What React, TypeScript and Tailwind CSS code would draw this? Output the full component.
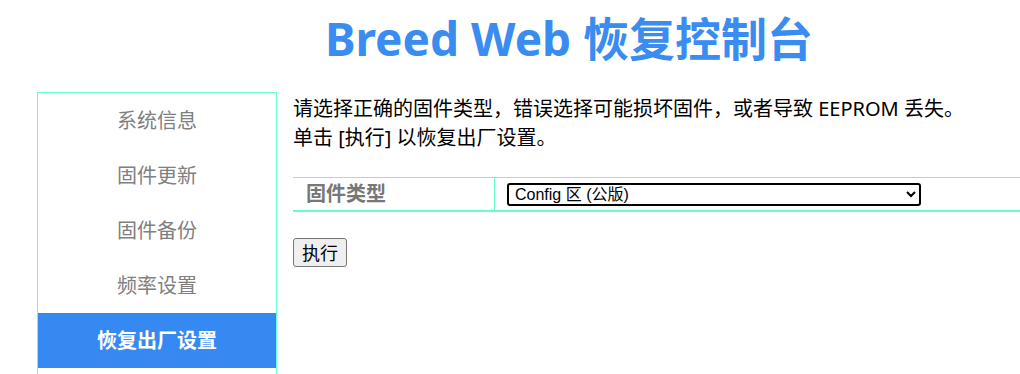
const menu = ["系统信息", "固件更新", "固件备份", "频率设置", "恢复出厂设置"];

export default function App() {
  return (
    <div
      className="h-[374px] w-full overflow-hidden bg-white text-black"
      style={{ fontFamily: '"Noto Sans", "Noto Sans CJK SC", sans-serif' }}
    >
      <h1 className="flex h-[92px] items-center justify-center pl-[118px] pb-[16px] text-[46px] font-bold leading-none text-[#3a8cf0]">
        Breed Web 恢复控制台
      </h1>
      <div className="flex pl-[37px]">
        <ul className="h-[300px] w-[240px] shrink-0 border border-[#66ffcc]">
          {menu.map((item, i) => (
            <li
              key={item}
              className={
                i === menu.length - 1
                  ? "flex h-[55px] items-center justify-center bg-[#3589f0] text-[20px] font-bold text-white"
                  : "flex h-[55px] items-center justify-center text-[20px] text-[#808080]"
              }
            >
              {item}
            </li>
          ))}
        </ul>
        <div className="ml-[16px] flex-1">
          <p className="pt-[2px] text-[20px] leading-[29px]">
            请选择正确的固件类型，错误选择可能损坏固件，或者导致 EEPROM 丢失。
            <br />
            单击 [执行] 以恢复出厂设置。
          </p>
          <div className="mt-[25px] flex w-[760px] border-t border-b-2 border-[#66ffcc]">
            <div className="flex h-[32px] w-[202px] items-center border-r border-[#66ffcc] pl-[13px] text-[20px] font-bold text-[#777777]">
              固件类型
            </div>
            <div className="flex items-center pl-[12px]">
              <select
                className="h-[23px] w-[414px] rounded-[3px] border-2 border-black bg-white pl-[2px] text-[16px] leading-none"
                style={{ fontFamily: '"Liberation Sans", "Noto Sans CJK SC", sans-serif' }}
              >
                <option>Config 区 (公版)</option>
              </select>
            </div>
          </div>
          <button className="mt-[26px] h-[29px] rounded-[3px] border border-[#767676] bg-[#efefef] px-[8px] text-[18px] leading-none">
            执行
          </button>
        </div>
      </div>
    </div>
  );
}
